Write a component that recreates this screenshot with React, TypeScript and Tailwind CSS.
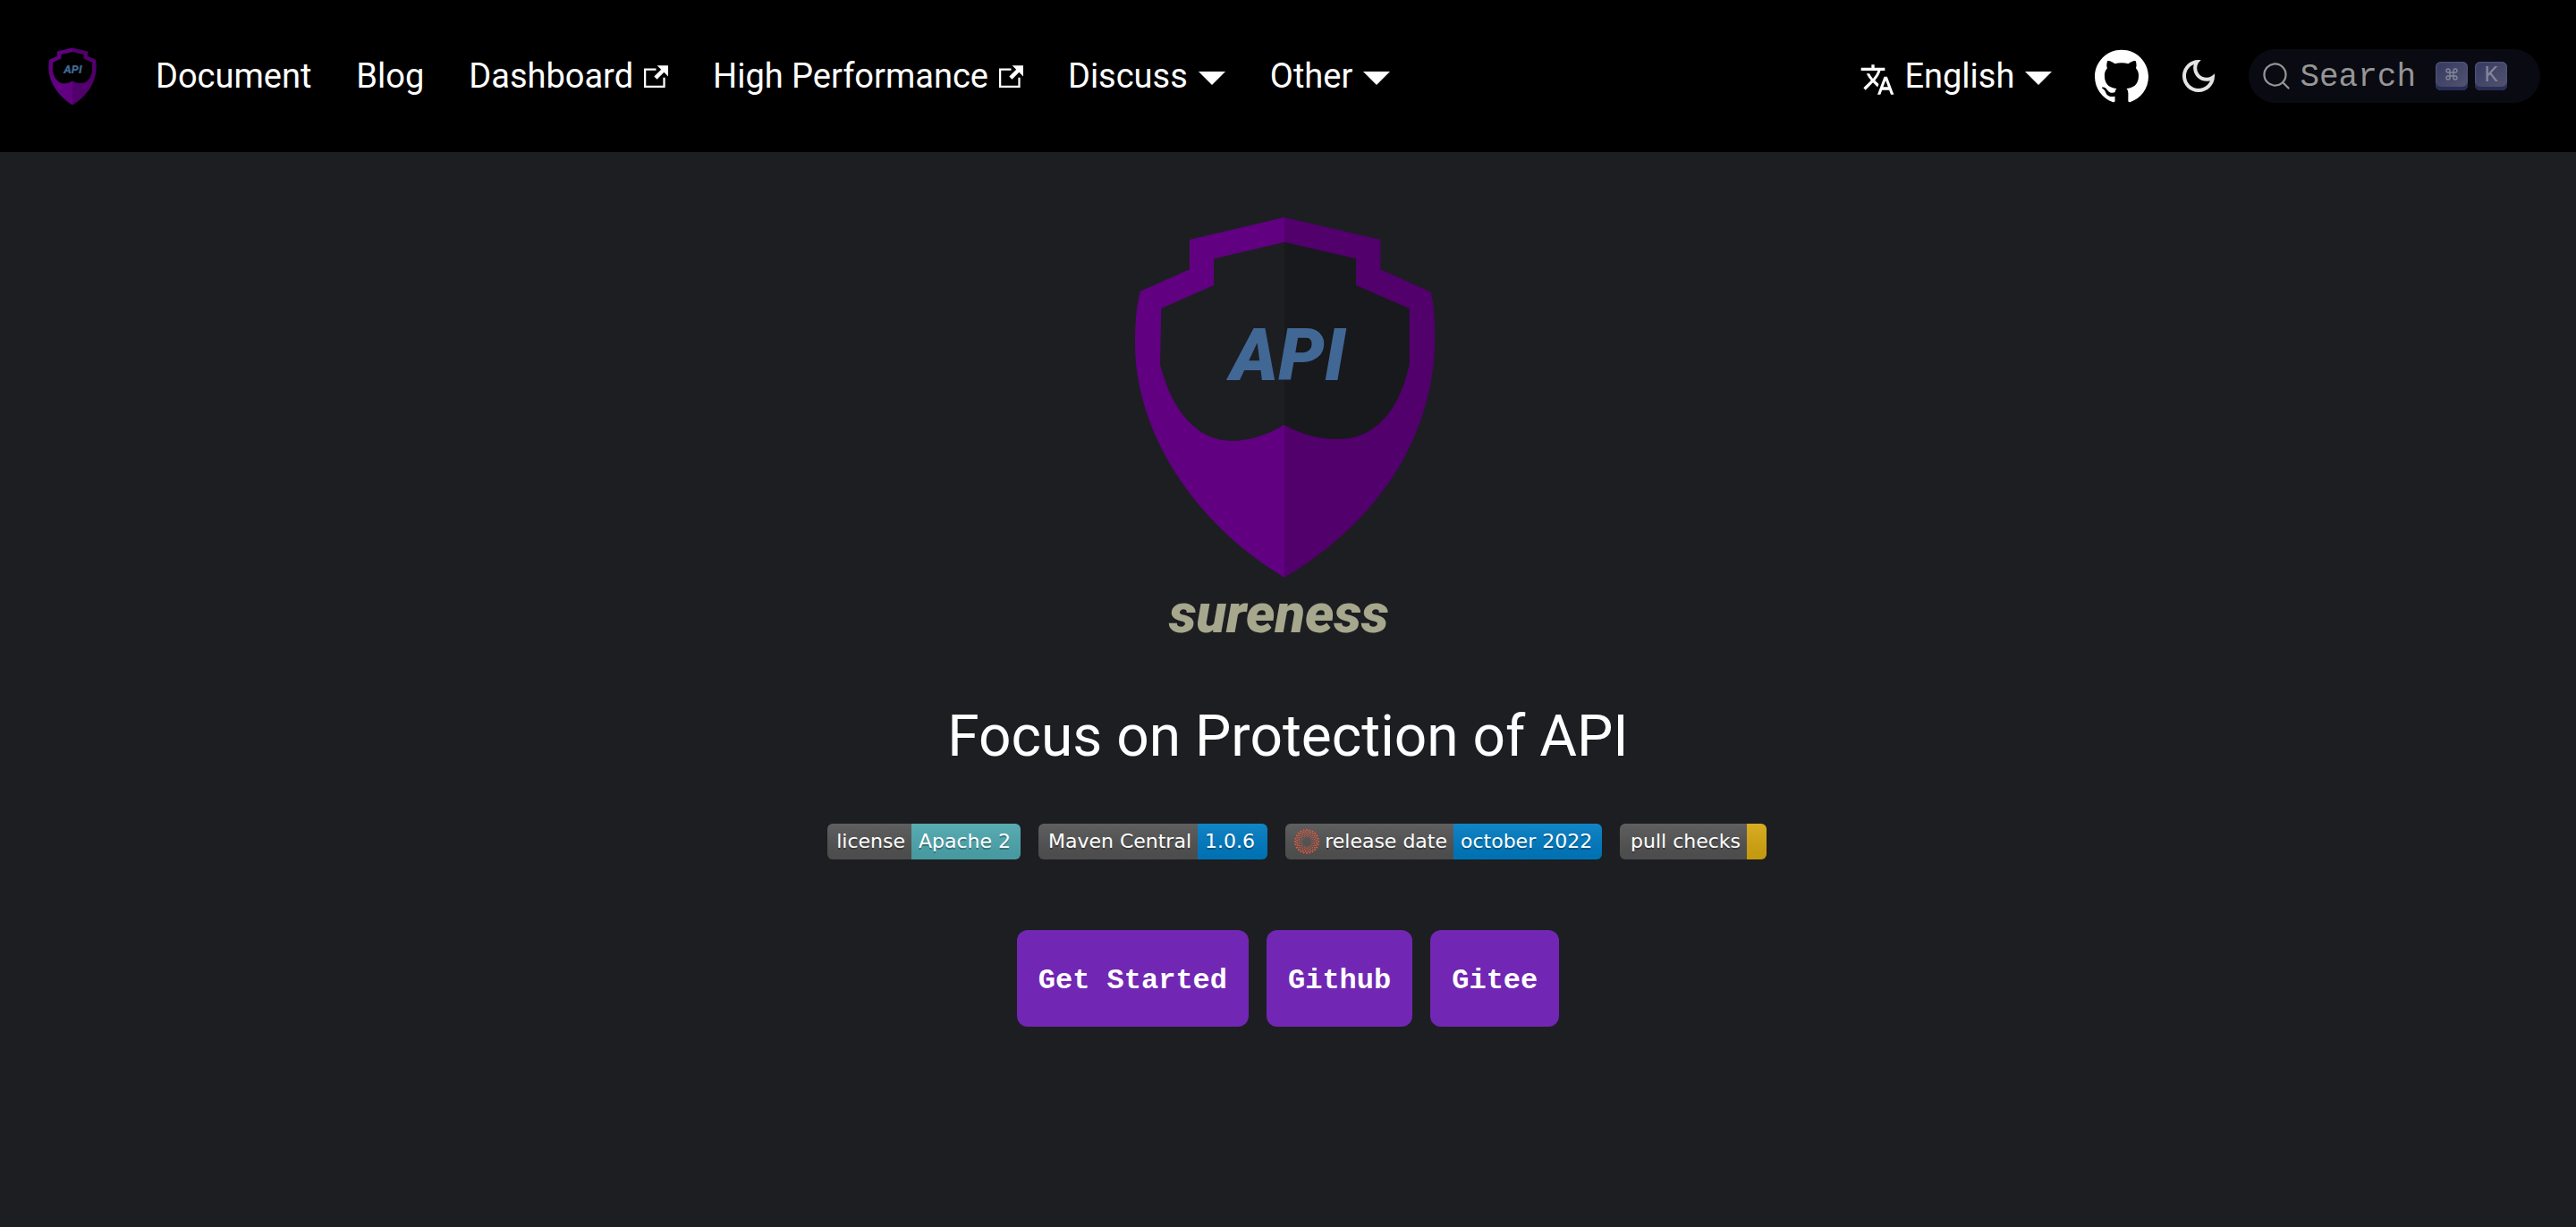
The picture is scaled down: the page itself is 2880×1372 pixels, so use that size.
import React from 'react';

function ShieldShapes() {
  return (
    <>
      <path
        fillRule="evenodd"
        fill="#610081"
        d="M648 69 L330 144 V244 L164 317 C149 385 147 430 147 500 C150 780 330 1085 648 1277 C970 1085 1148 800 1153 480 C1153 420 1150 370 1140 320 L970 244 V144 Z M648 152 L888 208 V297 L1067 375 V562 C1030 735 940 813 828 813 C760 813 700 796 648 765 C590 800 530 819 470 819 C370 819 275 740 231 562 L235 374 L411 297 V208 Z"
      />
      <path
        fill="#000000"
        fillOpacity="0.16"
        d="M648 69 V1277 C970 1085 1148 800 1153 480 C1153 420 1150 370 1140 320 L970 244 V144 Z"
      />
      <text
        x="660"
        y="614"
        textAnchor="middle"
        fill="#416795"
        fontSize="244"
        className="font-['Roboto',sans-serif] font-black italic"
      >
        API
      </text>
    </>
  );
}

function HeroLogo() {
  return (
    <svg viewBox="138 60 1044 1470" className="h-[490px] w-[348px]" role="img" aria-label="sureness">
      <ShieldShapes />
      <text
        x="629"
        y="1461"
        textAnchor="middle"
        fill="#a6a78c"
        fontSize="184"
        className="font-['Roboto',sans-serif] font-black italic"
      >
        sureness
      </text>
    </svg>
  );
}

function ExternalIcon() {
  return (
    <svg viewBox="0 0 24 24" className="ml-3 size-[27px] fill-current" aria-hidden="true">
      <path d="M21 13v10h-21v-19h12v2h-10v15h17v-8h2zm3-12h-10.988l4.035 4-6.977 7.07 2.828 2.828 6.977-7.07 4.125 4.172v-11z" />
    </svg>
  );
}

function Caret() {
  return (
    <svg viewBox="0 0 30 15" className="mt-1 ml-3 h-[15px] w-[30px] fill-current" aria-hidden="true">
      <path d="M0 0H30L15 15Z" />
    </svg>
  );
}

const links = [
  { label: 'Document', kind: 'plain' },
  { label: 'Blog', kind: 'plain' },
  { label: 'Dashboard', kind: 'external' },
  { label: 'High Performance', kind: 'external' },
  { label: 'Discuss', kind: 'menu' },
  { label: 'Other', kind: 'menu' },
];

const rings = [
  { r: 5.5, dot: 0.4 },
  { r: 7.2, dot: 0.55 },
  { r: 9, dot: 0.7 },
  { r: 11, dot: 0.85 },
  { r: 13, dot: 1 },
];

function Sunburst() {
  return (
    <svg viewBox="-14 -14 28 28" className="size-7 shrink-0" aria-hidden="true">
      {rings.map((ring, i) =>
        Array.from({ length: 24 }, (_, n) => {
          const a = ((n + (i % 2) / 2) * Math.PI) / 12;
          return (
            <circle key={`${i}-${n}`} cx={ring.r * Math.cos(a)} cy={ring.r * Math.sin(a)} r={ring.dot} fill="#e8593f" />
          );
        }),
      )}
    </svg>
  );
}

const badges = [
  { left: 'license', right: 'Apache 2', lw: 'w-[94px]', rw: 'w-[122px]', color: 'bg-[#50abb3]' },
  { left: 'Maven Central', right: '1.0.6', lw: 'w-[178px]', rw: 'w-[78px]', color: 'bg-[#007ec6]' },
  { left: 'release date', right: 'october 2022', lw: 'w-[188px]', rw: 'w-[166px]', color: 'bg-[#007ec6]', logo: true },
  { left: 'pull checks', right: '', lw: 'w-[142px]', rw: 'w-[22px]', color: 'bg-[#dbab12]' },
];

export default function App() {
  return (
    <div className="min-h-screen bg-[#1d1e22] font-['Roboto',sans-serif] text-white">
      <header className="flex h-[170px] items-center justify-between bg-black pr-10 pl-[54px] text-[38px]">
        <nav className="flex items-center gap-[50px]" aria-label="Main">
          <a href="#home" className="mr-4" aria-label="Home">
            <svg viewBox="140 60 1020 1225" className="h-[65px] w-[54px]" aria-hidden="true">
              <ShieldShapes />
            </svg>
          </a>
          {links.map((l) => (
            <a key={l.label} href="#nav" className="flex items-center whitespace-nowrap">
              {l.label}
              {l.kind === 'external' && <ExternalIcon />}
              {l.kind === 'menu' && <Caret />}
            </a>
          ))}
        </nav>
        <div className="flex items-center">
          <a href="#language" className="mr-12 flex items-center">
            <svg viewBox="0 0 24 24" className="mt-2 mr-2.5 size-10 fill-current" aria-hidden="true">
              <path d="M12.87 15.07l-2.54-2.51.03-.03c1.74-1.94 2.98-4.17 3.71-6.53H17V4h-7V2H8v2H1v1.99h11.17C11.5 7.92 10.44 9.75 9 11.35 8.07 10.32 7.3 9.19 6.69 8h-2c.73 1.63 1.73 3.17 2.98 4.56l-5.09 5.02L4 19l5-5 3.11 3.11.76-2.04zM18.5 10h-2L12 22h2l1.12-3h4.75L21 22h2l-4.5-12zm-2.62 7l1.62-4.33L19.12 17h-3.24z" />
            </svg>
            English
            <Caret />
          </a>
          <a href="#github" aria-label="GitHub repository">
            <svg viewBox="0 0 24 24" className="size-[60px] fill-white" aria-hidden="true">
              <path d="M12 .297c-6.63 0-12 5.373-12 12 0 5.303 3.438 9.8 8.205 11.385.6.113.82-.258.82-.577 0-.285-.01-1.04-.015-2.04-3.338.724-4.042-1.61-4.042-1.61C4.422 18.07 3.633 17.7 3.633 17.7c-1.087-.744.084-.729.084-.729 1.205.084 1.838 1.236 1.838 1.236 1.07 1.835 2.809 1.305 3.495.998.108-.776.417-1.305.76-1.605-2.665-.3-5.466-1.332-5.466-5.93 0-1.31.465-2.38 1.235-3.22-.135-.303-.54-1.523.105-3.176 0 0 1.005-.322 3.3 1.23.96-.267 1.98-.399 3-.405 1.02.006 2.04.138 3 .405 2.28-1.552 3.285-1.23 3.285-1.23.645 1.653.24 2.873.12 3.176.765.84 1.23 1.91 1.23 3.22 0 4.61-2.805 5.625-5.475 5.92.42.36.81 1.096.81 2.22 0 1.606-.015 2.896-.015 3.286 0 .315.21.69.825.57C20.565 22.092 24 17.592 24 12.297c0-6.627-5.373-12-12-12" />
            </svg>
          </a>
          <button type="button" aria-label="Switch theme" className="mx-6 flex size-16 items-center justify-center text-[#e3e3e3]">
            <svg viewBox="0 0 24 24" className="size-12 fill-current" aria-hidden="true">
              <path d="M9.37,5.51C9.19,6.15,9.1,6.82,9.1,7.5c0,4.08,3.32,7.4,7.4,7.4c0.68,0,1.35-0.09,1.99-0.27C17.45,17.19,14.93,19,12,19c-3.86,0-7-3.14-7-7C5,9.07,6.81,6.55,9.37,5.51z M12,3c-4.97,0-9,4.03-9,9s4.03,9,9,9s9-4.03,9-9c0-0.46-0.04-0.92-0.1-1.36c-0.98,1.37-2.58,2.26-4.4,2.26c-2.98,0-5.4-2.42-5.4-5.4c0-1.81,0.89-3.42,2.26-4.4C12.92,3.04,12.46,3,12,3L12,3z" />
            </svg>
          </button>
          <button type="button" className="flex h-[60px] items-center rounded-full bg-[#0a0a12] pr-[37px] pl-[15px] text-[#969696]">
            <svg viewBox="0 0 20 20" className="size-8" aria-hidden="true">
              <path
                d="M14.386 14.386l4.0877 4.0877-4.0877-4.0877c-2.9418 2.9419-7.7115 2.9419-10.6533 0-2.9419-2.9418-2.9419-7.7115 0-10.6533 2.9418-2.9419 7.7115-2.9419 10.6533 0 2.9419 2.9418 2.9419 7.7115 0 10.6533z"
                stroke="currentColor"
                strokeWidth="1.4"
                fill="none"
                strokeLinecap="round"
                strokeLinejoin="round"
              />
            </svg>
            <span className="mt-1 mr-[22px] ml-2.5 font-['Liberation_Mono',monospace] text-[36px]">Search</span>
            <kbd className="mr-2 flex h-8 w-9 items-center justify-center rounded-md bg-linear-to-br from-[#353961] to-[#54556f] pb-1 shadow-[inset_0_-4px_0_#282d55,inset_0_0_2px_1px_#51577d]">
              <svg viewBox="0 0 24 24" className="size-4" fill="none" stroke="#85869a" strokeWidth="2" aria-label="Command">
                <path d="M15 6v12a3 3 0 1 0 3-3H6a3 3 0 1 0 3 3V6a3 3 0 1 0-3 3h12a3 3 0 1 0-3-3" />
              </svg>
            </kbd>
            <kbd className="flex h-8 w-9 items-center justify-center rounded-md bg-linear-to-br from-[#353961] to-[#54556f] pb-1 font-['Roboto',sans-serif] text-[24px] leading-6 text-[#85869a] shadow-[inset_0_-4px_0_#282d55,inset_0_0_2px_1px_#51577d]">
              K
            </kbd>
          </button>
        </div>
      </header>

      <main className="flex flex-col items-center pt-[70px]">
        <HeroLogo />
        <h1 className="mt-[54px] text-[64px] leading-[80px] font-normal">Focus on Protection of API</h1>
        <div className="mt-[57px] flex gap-5 pl-5 font-['DejaVu_Sans',sans-serif] text-[22px] leading-10 whitespace-nowrap [text-shadow:0_2px_0_rgba(1,1,1,0.3)]">
          {badges.map((b) => (
            <a key={b.left} href="#badge" className="flex h-10 overflow-hidden rounded-md">
              <span className={`flex items-center justify-end bg-[#555555] bg-linear-to-b from-[#bbbbbb]/10 to-black/10 pr-[7px] ${b.lw}`}>
                {b.logo && (
                  <span className="mr-auto pl-2.5">
                    <Sunburst />
                  </span>
                )}
                {b.left}
              </span>
              <span className={`bg-linear-to-b from-[#bbbbbb]/10 to-black/10 ${b.right ? 'pl-2' : ''} ${b.rw} ${b.color}`}>{b.right}</span>
            </a>
          ))}
        </div>
        <div className="mt-[79px] flex gap-5 font-['Liberation_Mono',monospace] text-[32px] font-bold">
          {['Get Started', 'Github', 'Gitee'].map((t) => (
            <a key={t} href="#go" className="flex h-[108px] items-center rounded-xl bg-[#7127b3] px-6 pt-1.5">
              {t}
            </a>
          ))}
        </div>
      </main>
    </div>
  );
}
